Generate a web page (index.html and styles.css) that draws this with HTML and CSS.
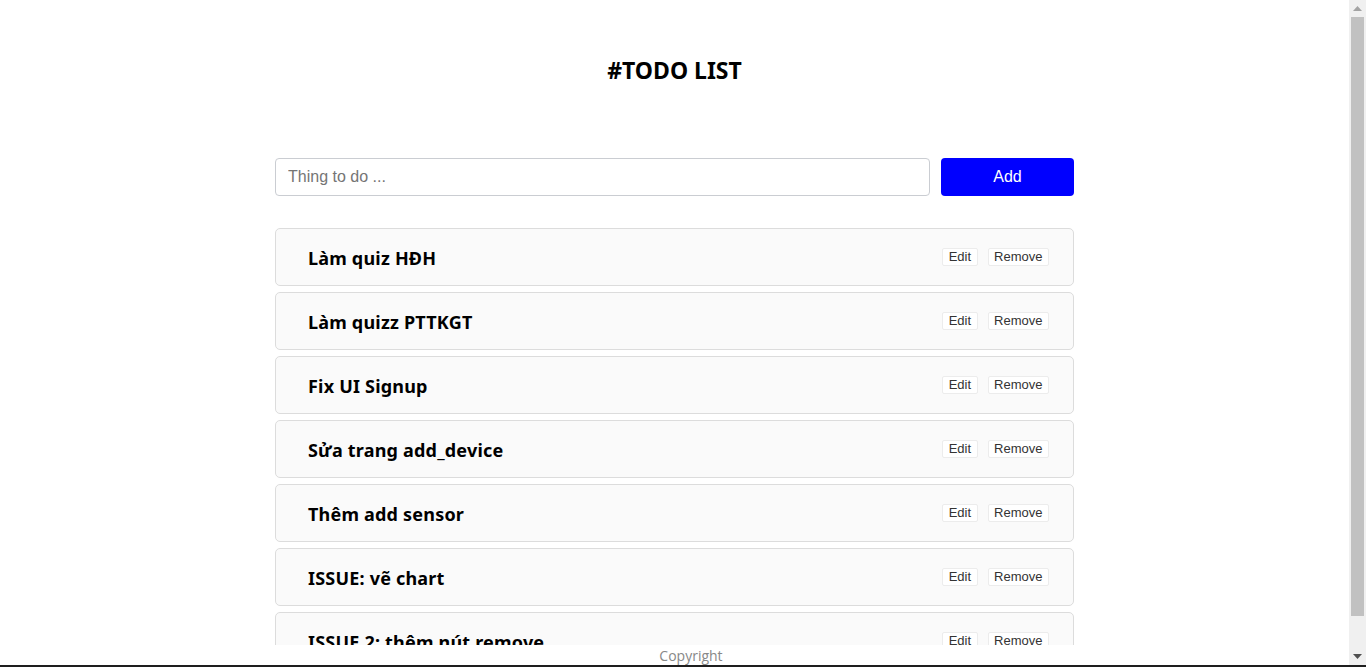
FILE: index.html
```html
<!DOCTYPE html>
<html lang="vi">
<head>
<meta charset="utf-8">
<title>Todo List</title>
<link rel="stylesheet" href="styles.css">
</head>
<body>
<div class="screen">
  <div class="page">
    <main class="container">
      <h1 class="title">#TODO LIST</h1>
      <form class="add-form">
        <input class="add-input" type="text" placeholder="Thing to do ...">
        <button class="add-btn" type="button">Add</button>
      </form>
      <ul class="todo-list">
        <li class="todo"><span class="todo-text">Làm quiz HĐH</span><span class="actions"><button class="act">Edit</button><button class="act">Remove</button></span></li>
        <li class="todo"><span class="todo-text">Làm quizz PTTKGT</span><span class="actions"><button class="act">Edit</button><button class="act">Remove</button></span></li>
        <li class="todo"><span class="todo-text">Fix UI Signup</span><span class="actions"><button class="act">Edit</button><button class="act">Remove</button></span></li>
        <li class="todo"><span class="todo-text">Sửa trang add_device</span><span class="actions"><button class="act">Edit</button><button class="act">Remove</button></span></li>
        <li class="todo"><span class="todo-text">Thêm add sensor</span><span class="actions"><button class="act">Edit</button><button class="act">Remove</button></span></li>
        <li class="todo"><span class="todo-text">ISSUE: vẽ chart</span><span class="actions"><button class="act">Edit</button><button class="act">Remove</button></span></li>
        <li class="todo"><span class="todo-text">ISSUE 2: thêm nút remove</span><span class="actions"><button class="act">Edit</button><button class="act">Remove</button></span></li>
      </ul>
    </main>
    <footer class="footer">Copyright</footer>
  </div>
  <div class="scrollbar">
    <div class="sb-btn">
      <svg width="9" height="5" viewBox="0 0 9 5"><polygon points="0,5 4.5,0 9,5" fill="#a3a3a3"/></svg>
    </div>
    <div class="sb-track"><div class="sb-thumb"></div></div>
    <div class="sb-btn">
      <svg width="9" height="5" viewBox="0 0 9 5"><polygon points="0,0 4.5,5 9,0" fill="#505050"/></svg>
    </div>
  </div>
</div>
<div class="taskbar"></div>
</body>
</html>
```

FILE: styles.css
```css
html, body {
  margin: 0;
  padding: 0;
  overflow: hidden;
  background: #fff;
}

.screen {
  display: flex;
  height: 665px;
}

.page {
  position: relative;
  flex: 1;
  overflow: hidden;
}

.scrollbar {
  width: 17px;
  background: #f0f0f0;
  display: flex;
  flex-direction: column;
}

.sb-btn {
  height: 17px;
  display: flex;
  align-items: center;
  justify-content: center;
}

.sb-track {
  flex: 1;
  padding: 0 2px 32px;
  display: flex;
}

.sb-thumb {
  flex: 1;
  background: #c1c1c1;
}

.container {
  width: 799px;
  margin: 0 auto;
  padding: 54px 0 36px;
}

.title {
  margin: 0;
  text-align: center;
  font-family: "Noto Sans", "Open Sans", sans-serif;
  font-weight: 700;
  font-size: 23px;
  line-height: 32px;
  color: #000;
}

.add-form {
  display: flex;
  gap: 11px;
  margin: 72px 0 32px;
}

.add-input {
  flex: 1;
  height: 38px;
  box-sizing: border-box;
  border: 1px solid #cacdd2;
  border-radius: 4px;
  padding: 0 12px;
  font-family: "Liberation Sans", Arial, sans-serif;
  font-size: 16px;
  color: #333;
  outline: none;
}
.add-input::placeholder {
  color: #757575;
}

.add-btn {
  width: 133px;
  height: 38px;
  border: none;
  border-radius: 4px;
  background: #0000ff;
  color: #fff;
  font-family: "Liberation Sans", Arial, sans-serif;
  font-size: 16px;
  cursor: pointer;
}

.todo-list {
  list-style: none;
  margin: 0;
  padding: 0;
  display: flex;
  flex-direction: column;
  gap: 6px;
}

.todo {
  height: 58px;
  box-sizing: border-box;
  display: flex;
  align-items: center;
  justify-content: space-between;
  padding: 0 24px 0 32px;
  background: #fafafa;
  border: 1px solid #dcdcdc;
  border-radius: 5px;
}

.todo-text {
  font-family: "Noto Sans", "Open Sans", sans-serif;
  font-weight: 700;
  font-size: 18px;
  letter-spacing: 0.2px;
  line-height: 26px;
  padding-top: 1px;
  color: #000;
}

.actions {
  display: flex;
  gap: 10px;
}

.act {
  height: 18px;
  box-sizing: border-box;
  padding: 0 5.5px;
  border: 1px solid #ececec;
  border-radius: 2px;
  background: #fff;
  color: #333;
  font-family: "Liberation Sans", Arial, sans-serif;
  font-size: 13px;
  line-height: 16px;
  cursor: pointer;
}

.footer {
  position: absolute;
  left: 0;
  right: 0;
  bottom: 0;
  height: 20px;
  background: #fff;
  padding-left: 33px;
  text-align: center;
  font-family: "Open Sans", "Noto Sans", sans-serif;
  font-size: 14px;
  line-height: 22px;
  color: #888;
}

.taskbar {
  height: 2px;
  background: #1e1e1e;
}
```
